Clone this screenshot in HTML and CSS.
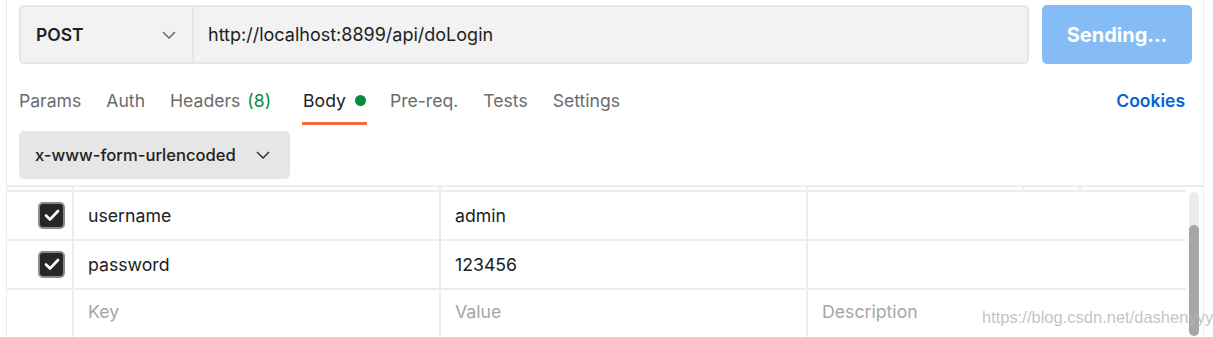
FILE: index.html
```html
<!DOCTYPE html>
<html>
<head>
<meta charset="utf-8">
<link rel="stylesheet" href="styles.css">
</head>
<body>
<div class="pane">
  <div class="request-bar">
    <div class="url-group">
      <div class="method">
        <span class="method-name">POST</span>
        <svg class="chev" width="14" height="8" viewBox="0 0 14 8"><path d="M1 1 L7 7 L13 1" fill="none" stroke="#6b6b6b" stroke-width="1.5"/></svg>
      </div>
      <div class="url">http://localhost:8899/api/doLogin</div>
    </div>
    <button class="send">Sending...</button>
  </div>

  <div class="tabs">
    <div class="tab">Params</div>
    <div class="tab">Auth</div>
    <div class="tab">Headers <span class="count">(8)</span></div>
    <div class="tab active">Body <span class="dot"></span></div>
    <div class="tab">Pre-req.</div>
    <div class="tab">Tests</div>
    <div class="tab">Settings</div>
    <div class="spacer"></div>
    <div class="cookies">Cookies</div>
  </div>

  <div class="body-type-row">
    <div class="body-type">
      <span>x-www-form-urlencoded</span>
      <svg class="chev" width="14" height="8" viewBox="0 0 14 8"><path d="M1 1 L7 7 L13 1" fill="none" stroke="#333" stroke-width="1.5"/></svg>
    </div>
  </div>

  <div class="table-wrap">
    <div class="head-strip">
      <div class="hc c-check"></div>
      <div class="hc c-key"></div>
      <div class="hc c-val"></div>
      <div class="hc c-desc1"></div>
      <div class="hc c-desc2"></div>
      <div class="hc c-desc3"></div>
    </div>
    <div class="row">
      <div class="cell c-check"><span class="cb"><svg width="16" height="13" viewBox="0 0 16 13"><path d="M2 6.5 L6 10.5 L14 2" fill="none" stroke="#fff" stroke-width="2.6" stroke-linecap="round" stroke-linejoin="round"/></svg></span></div>
      <div class="cell c-key">username</div>
      <div class="cell c-val">admin</div>
      <div class="cell c-desc"></div>
    </div>
    <div class="row">
      <div class="cell c-check"><span class="cb"><svg width="16" height="13" viewBox="0 0 16 13"><path d="M2 6.5 L6 10.5 L14 2" fill="none" stroke="#fff" stroke-width="2.6" stroke-linecap="round" stroke-linejoin="round"/></svg></span></div>
      <div class="cell c-key">password</div>
      <div class="cell c-val">123456</div>
      <div class="cell c-desc"></div>
    </div>
    <div class="row last">
      <div class="cell c-check"></div>
      <div class="cell c-key ph">Key</div>
      <div class="cell c-val ph">Value</div>
      <div class="cell c-desc ph">Description</div>
    </div>
    <div class="scrollbar"><div class="thumb"></div></div>
  </div>
  <div class="watermark">https://blog.csdn.net/dashenyyy</div>
</div>
</body>
</html>
```

FILE: styles.css
```css
* { box-sizing: border-box; }
html, body {
  margin: 0;
  padding: 0;
  background: #fff;
  height: 337px;
  overflow: hidden;
}
body {
  font-family: Inter, "Open Sans", sans-serif;
  color: #212121;
}
.pane {
  position: relative;
  margin-left: 6px;
  width: 1198px;
  height: 337px;
  border-left: 1px solid #ececec;
  border-right: 1px solid #ececec;
  display: flex;
  flex-direction: column;
}
.request-bar {
  display: flex;
  gap: 13px;
  padding: 5px 11px 0 12px;
  height: 64px;
}
.url-group {
  flex: 1;
  display: flex;
  background: #f2f2f2;
  border: 2px solid #e6e6e6;
  border-radius: 5px;
}
.method {
  width: 173px;
  border-right: 2px solid #e6e6e6;
  display: flex;
  align-items: center;
  justify-content: space-between;
  padding: 0 16px 0 15px;
}
.method-name {
  font-weight: 600;
  font-size: 17.5px;
  color: #212121;
}
.url {
  display: flex;
  align-items: center;
  padding-left: 14px;
  font-size: 18px;
  color: #212121;
}
.send {
  width: 150px;
  border: none;
  border-radius: 5px;
  background: #85bcf5;
  color: #fff;
  font-family: Inter, sans-serif;
  font-weight: 700;
  font-size: 20px;
  padding: 0;
}
.tabs {
  display: flex;
  align-items: flex-start;
  gap: 25px;
  padding: 0 18px 0 12px;
  margin-top: 16px;
  height: 45px;
}
.tab {
  font-size: 17.6px;
  color: #6b6b6b;
  line-height: 26px;
  padding-top: 8px;
  padding-bottom: 8px;
  height: 45px;
  display: flex;
  align-items: flex-start;
  white-space: nowrap;
}
.tab .count {
  color: #0b8a3c;
  margin-left: 7px;
}
.tab.active {
  color: #212121;
  border-bottom: 3px solid #f26b3a;
  padding-left: 1px;
  margin: 0 -2px 0 6px;
}
.dot {
  display: inline-block;
  width: 11px;
  height: 11px;
  border-radius: 50%;
  background: #0b8a3c;
  margin: 7px 1px 0 9px;
}
.spacer { flex: 1; }
.cookies {
  color: #0265d2;
  font-weight: 600;
  font-size: 17.5px;
  line-height: 26px;
  padding-top: 8px;
}
.body-type-row {
  padding: 6px 0 0 12px;
}
.body-type {
  width: 271px;
  height: 48px;
  background: #e6e6e6;
  border-radius: 5px;
  display: flex;
  align-items: center;
  justify-content: space-between;
  padding: 0 20px 0 16px;
  font-size: 16.6px;
  font-weight: 500;
  color: #212121;
}
.table-wrap {
  position: relative;
  margin-top: 6px;
  flex: 1;
  border-top: 2px solid #ededed;
  overflow: hidden;
}
.head-strip {
  display: flex;
  height: 5px;
  border-bottom: 2px solid #ededed;
  margin-right: 17px;
}
.hc { border-right: 2px solid #ededed; }
.c-check { width: 67px; flex: none; }
.c-key { width: 367px; flex: none; }
.c-val { width: 367px; flex: none; }
.c-desc1 { width: 216px; flex: none; }
.c-desc2 { width: 57px; flex: none; }
.c-desc3 { flex: 1; border-right: none; }
.row {
  display: flex;
  height: 49px;
  border-bottom: 2px solid #ededed;
  margin-right: 17px;
}
.row.last { border-bottom: none; }
.cell {
  border-right: 2px solid #ededed;
  display: flex;
  align-items: center;
  padding-left: 14px;
  font-size: 17.7px;
  color: #212121;
}
.cell.c-check {
  justify-content: flex-end;
  padding-left: 0;
  padding-right: 7px;
}
.cell.c-desc {
  flex: 1;
  border-right: none;
}
.cell.ph { color: #a6a6a6; }
.row.last .cell { align-items: flex-start; padding-top: 11px; }
.cb {
  width: 27px;
  height: 27px;
  border-radius: 5px;
  background: #262626;
  border: 2px solid #8a8a8a;
  display: flex;
  align-items: center;
  justify-content: center;
}
.scrollbar {
  position: absolute;
  right: 4px;
  top: 5px;
  width: 10px;
  bottom: 1px;
  border-radius: 5px;
  background: #ececec;
}
.thumb {
  position: absolute;
  left: 0;
  right: 0;
  top: 33px;
  bottom: 0;
  border-radius: 5px;
  background: #a6a6a6;
}
.watermark {
  position: absolute;
  left: 975px;
  top: 308px;
  font-family: "Liberation Sans", Arial, sans-serif;
  font-size: 16.5px;
  color: rgba(185, 185, 185, 0.85);
  white-space: nowrap;
}
```
